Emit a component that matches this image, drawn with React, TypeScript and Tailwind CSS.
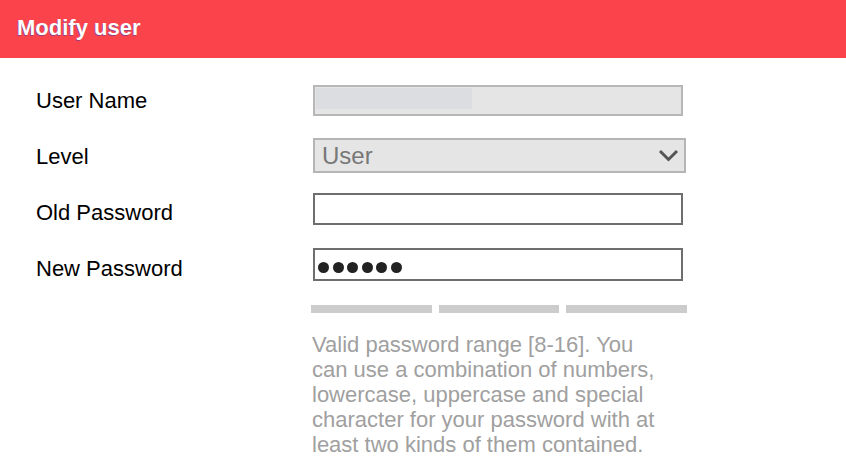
import React from "react";

export default function App() {
  const font = { fontFamily: '"Liberation Sans", Arial, sans-serif' };
  return (
    <div className="w-[846px] h-[472px] bg-white overflow-hidden" style={font}>
      <div className="h-[58px] bg-[#fa434a] flex items-center pl-[17px]">
        <span className="text-white font-bold text-[22px] leading-none [text-shadow:-1px_1px_0_rgba(70,60,170,0.55)] -mt-[3px]">
          Modify user
        </span>
      </div>
      <div className="pt-[14px]">
        {/* User Name */}
        <div className="flex h-[56px]">
          <div className="w-[313px] shrink-0 pl-[36px] self-center text-[22px] text-black leading-[25px]">User Name</div>
          <div className="mt-[13px] w-[370px] h-[31px] border-2 border-[#b7b7b7] bg-[#e5e5e5] p-[1px]">
            <div className="w-[156px] h-[21px] bg-[#dcdde0]" />
          </div>
        </div>
        {/* Level */}
        <div className="flex h-[56px]">
          <div className="w-[313px] shrink-0 pl-[36px] self-center text-[22px] text-black leading-[25px]">Level</div>
          <div className="mt-[10px] w-[373px] h-[35px] border-2 border-[#b5b5b5] bg-[#e5e5e5] flex items-center justify-between pl-[7px] pr-[5px]">
            <span className="text-[24px] text-[#777777] leading-none">User</span>
            <svg width="21" height="14" viewBox="0 0 21 14">
              <path d="M2 2 L10.5 10.5 L19 2" fill="none" stroke="#555555" strokeWidth="3" />
            </svg>
          </div>
        </div>
        {/* Old Password */}
        <div className="flex h-[56px]">
          <div className="w-[313px] shrink-0 pl-[36px] self-center text-[22px] text-black leading-[25px]">Old Password</div>
          <div className="mt-[9px] w-[370px] h-[32px] border-2 border-[#6e6e6e] bg-white" />
        </div>
        {/* New Password */}
        <div className="flex h-[56px]">
          <div className="w-[313px] shrink-0 pl-[36px] self-center text-[22px] text-black leading-[25px]">New Password</div>
          <div className="mt-[8px] w-[370px] h-[33px] border-2 border-[#6e6e6e] bg-white flex items-center pl-[3px] pt-[6px]">
            <div className="flex gap-[3.5px]">
              {[0, 1, 2, 3, 4, 5].map((i) => (
                <span key={i} className="block w-[11px] h-[11px] rounded-full bg-[#222222]" />
              ))}
            </div>
          </div>
        </div>
        {/* Strength bars */}
        <div className="ml-[311px] mt-[9px] w-[376px] grid grid-cols-3 gap-[7px]">
          <div className="h-[8px] bg-[#cccccc]" />
          <div className="h-[8px] bg-[#cccccc]" />
          <div className="h-[8px] bg-[#cccccc]" />
        </div>
        <p className="ml-[312px] mt-[19px] w-[350px] text-[22px] leading-[25px] text-[#a0a0a0]">
          Valid password range [8-16]. You can use a combination of numbers, lowercase, uppercase and special character for your password with at least two kinds of them contained.
        </p>
      </div>
    </div>
  );
}
